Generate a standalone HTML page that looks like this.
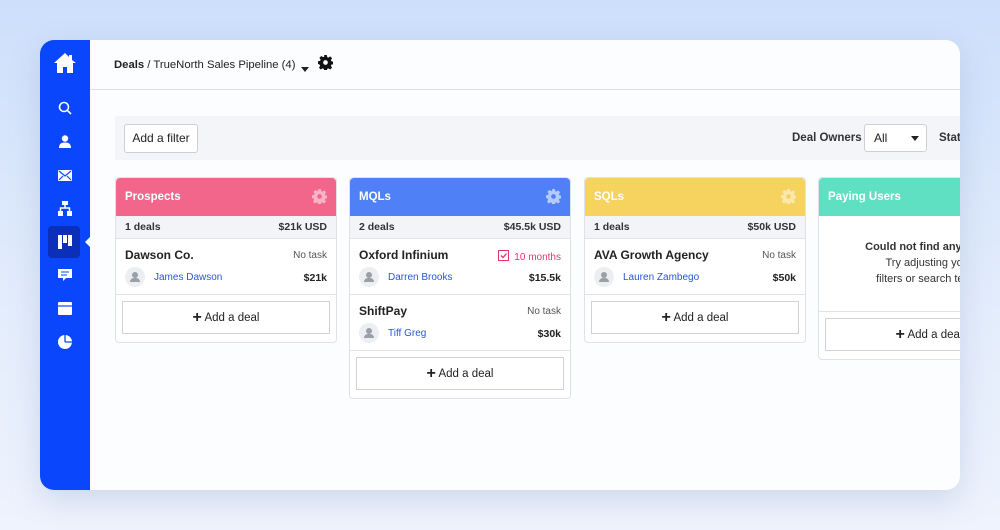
<!DOCTYPE html><html><head><style>
*{box-sizing:border-box;margin:0;padding:0}
body{width:1000px;height:530px;overflow:hidden;background:linear-gradient(180deg,#cddffb 0%,#e4edfc 60%,#eef3fd 100%);font-family:"Liberation Sans",sans-serif;color:#222;position:relative}
.card{position:absolute;left:40px;top:40px;width:920px;height:450px;background:#fcfdfe;border-radius:14px;overflow:hidden;box-shadow:0 10px 30px rgba(120,140,180,.25)}
.side{position:absolute;left:0;top:0;width:50px;height:450px;background:#0a46fb}
.ic{position:absolute;left:0;width:50px;display:flex;justify-content:center}
.top{position:absolute;left:50px;top:0;right:0;height:50px;border-bottom:1px solid #dde1e7}
.crumb{position:absolute;left:24px;top:19px;font-size:11.3px;color:#222;white-space:nowrap}
.bar{position:absolute;left:75px;top:76px;right:0;height:44px;background:#f3f5f9}
.btn{position:absolute;background:#fff;border:1px solid #ccd0d6;border-radius:3px;font-size:12px}
.col{position:absolute;top:137px;width:222px;border:1px solid #dfe2e6;border-radius:4px;background:#fff}
.hd{height:38px;border-radius:4px 4px 0 0;color:#fff;font-weight:bold;font-size:11.5px;padding:13px 9px;position:relative}
.gear{position:absolute;right:9px;top:11px}
.sum{height:23px;background:#f2f4f8;border-bottom:1px solid #dfe2e6;font-size:10.5px;font-weight:bold;color:#333;display:flex;justify-content:space-between;padding:5px 9px}
.deal{height:56px;border-bottom:1px solid #dfe2e6;position:relative;font-size:11px}
.nm{position:absolute;left:9px;top:9px;font-weight:bold;font-size:12px}
.tk{position:absolute;right:9px;top:11px;font-size:10px;color:#555}
.av{position:absolute;left:9px;top:28px;width:20px;height:20px;border-radius:50%;background:#eceef1}
.av:after{content:"";position:absolute;left:7px;top:5px;width:6px;height:6px;border-radius:50%;background:#9aa0a8}
.av:before{content:"";position:absolute;left:5px;top:11px;width:10px;height:4px;border-radius:5px 5px 0 0;background:#9aa0a8}
.pn{position:absolute;left:38px;top:33px;font-size:10px;color:#2a55d8}
.am{position:absolute;right:9px;top:33px;font-size:10.5px;font-weight:bold}
.add{height:47px;padding:6px 6px}
.add div{border:1px solid #cfd3d8;height:33px;text-align:center;font-size:11.5px;line-height:31px;color:#222}
.add b{font-size:16px;font-weight:bold;vertical-align:-1px}
</style></head><body>
<div class="card">
<div class="side">
<div class="ic" style="top:12px"><svg width="24" height="22" viewBox="0 0 24 22"><path d="M12 1L1 11h3v10h6v-6h4v6h6V11h3L19 8V3h-3v2z" fill="#fff"/></svg></div>
<div class="ic" style="top:61px"><svg width="14" height="14"><circle cx="6" cy="6" r="4.5" stroke="#fff" stroke-width="1.6" fill="none"/><path d="M9.5 9.5L13 13" stroke="#fff" stroke-width="1.6"/></svg></div>
<div class="ic" style="top:95px"><svg width="12" height="13"><circle cx="6" cy="3.5" r="3.2" fill="#fff"/><path d="M0 13c0-4 2-5.5 6-5.5s6 1.5 6 5.5z" fill="#fff"/></svg></div>
<div class="ic" style="top:130px"><svg width="14" height="11"><rect width="14" height="11" rx="1" fill="#fff"/><path d="M1 1l6 5 6-5M1 10l4-4M13 10l-4-4" stroke="#0a46fb" stroke-width="1.2" fill="none"/></svg></div>
<div class="ic" style="top:161px"><svg width="14" height="15"><rect x="4" y="0" width="6" height="4" fill="#fff"/><rect x="0" y="10" width="5" height="5" fill="#fff"/><rect x="9" y="10" width="5" height="5" fill="#fff"/><path d="M7 4v3M2.5 10V7h9v3" stroke="#fff" stroke-width="1.5" fill="none"/></svg></div>
<div style="position:absolute;left:8px;top:186px;width:32px;height:32px;background:#0b2fb8;border-radius:4px"></div>
<div class="ic" style="top:195px"><svg width="14" height="14"><rect x="0" y="0" width="4" height="14" fill="#fff"/><rect x="5" y="0" width="4" height="8" fill="#fff"/><rect x="10" y="0" width="4" height="11" fill="#fff"/></svg></div>
<div style="position:absolute;left:45px;top:197px;width:0;height:0;border-top:5px solid transparent;border-bottom:5px solid transparent;border-right:5px solid #fcfdfe"></div>
<div class="ic" style="top:228px"><svg width="14" height="14"><path d="M0 1h14v9H8l-3 3v-3H0z" fill="#fff"/><path d="M3 4h8M3 7h6" stroke="#0a46fb" stroke-width="1"/></svg></div>
<div class="ic" style="top:262px"><svg width="14" height="13"><rect width="14" height="13" rx="1" fill="#fff"/><path d="M0 4h14" stroke="#0a46fb" stroke-width="1.2"/></svg></div>
<div class="ic" style="top:295px"><svg width="14" height="14"><circle cx="7" cy="7" r="7" fill="#fff"/><path d="M7 7V0M7 7h7" stroke="#0a46fb" stroke-width="1.3"/></svg></div>
</div>
<div class="top"><div class="crumb"><b>Deals</b> / TrueNorth Sales Pipeline (4)</div>
<div style="position:absolute;left:211px;top:27px;width:0;height:0;border-left:4.5px solid transparent;border-right:4.5px solid transparent;border-top:5px solid #222"></div>
<svg style="position:absolute;left:228px;top:15px" width="15" height="15" viewBox="0 0 16 16"><path fill="#111" d="M6.6 0h2.8l.4 2.2 1.3.6 1.9-1.3 2 2-1.3 1.9.6 1.3 2.2.4v2.8l-2.2.4-.6 1.3 1.3 1.9-2 2-1.9-1.3-1.3.6-.4 2.2H6.6l-.4-2.2-1.3-.6-1.9 1.3-2-2 1.3-1.9-.6-1.3L0 9.4V6.6l2.2-.4.6-1.3-1.3-1.9 2-2 1.9 1.3 1.3-.6z"/><circle cx="8" cy="8" r="2.5" fill="#fff"/></svg></div>
<div class="bar">
<div class="btn" style="left:9px;top:8px;width:74px;height:29px;line-height:27px;text-align:center">Add a filter</div>
<div style="position:absolute;left:677px;top:16px;font-size:11.5px;font-weight:bold;color:#333">Deal Owners</div>
<div class="btn" style="left:749px;top:8px;width:63px;height:28px;line-height:26px;padding-left:9px">All<span style="position:absolute;right:7px;top:11px;width:0;height:0;border-left:4.5px solid transparent;border-right:4.5px solid transparent;border-top:5px solid #222"></span></div>
<div style="position:absolute;left:824px;top:16px;font-size:11.5px;font-weight:bold;color:#333">Stat</div>
</div>
<!-- col1 -->
<div class="col" style="left:75px"><div class="hd" style="background:#f2668b">Prospects<svg class="gear" width="15" height="15" viewBox="0 0 16 16"><path fill="#f9b3c6" d="M6.6 0h2.8l.4 2.2 1.3.6 1.9-1.3 2 2-1.3 1.9.6 1.3 2.2.4v2.8l-2.2.4-.6 1.3 1.3 1.9-2 2-1.9-1.3-1.3.6-.4 2.2H6.6l-.4-2.2-1.3-.6-1.9 1.3-2-2 1.3-1.9-.6-1.3L0 9.4V6.6l2.2-.4.6-1.3-1.3-1.9 2-2 1.9 1.3 1.3-.6z"/><circle cx="8" cy="8" r="2.5" fill="#f2668b"/></svg></div>
<div class="sum"><span>1 deals</span><span>$21k USD</span></div>
<div class="deal"><span class="nm">Dawson Co.</span><span class="tk">No task</span><span class="av"></span><span class="pn">James Dawson</span><span class="am">$21k</span></div>
<div class="add"><div><b>+</b> Add a deal</div></div></div>
<!-- col2 -->
<div class="col" style="left:309px"><div class="hd" style="background:#4f80f6">MQLs<svg class="gear" width="15" height="15" viewBox="0 0 16 16"><path fill="#b6cbfb" d="M6.6 0h2.8l.4 2.2 1.3.6 1.9-1.3 2 2-1.3 1.9.6 1.3 2.2.4v2.8l-2.2.4-.6 1.3 1.3 1.9-2 2-1.9-1.3-1.3.6-.4 2.2H6.6l-.4-2.2-1.3-.6-1.9 1.3-2-2 1.3-1.9-.6-1.3L0 9.4V6.6l2.2-.4.6-1.3-1.3-1.9 2-2 1.9 1.3 1.3-.6z"/><circle cx="8" cy="8" r="2.5" fill="#4f80f6"/></svg></div>
<div class="sum"><span>2 deals</span><span>$45.5k USD</span></div>
<div class="deal"><span class="nm">Oxford Infinium</span><span class="tk" style="color:#e0356b"><svg width="11" height="11" style="vertical-align:-1px;margin-right:5px"><rect x=".5" y=".5" width="10" height="10" fill="none" stroke="#e0356b"/><path d="M3 5.5l2 2 3.5-4" stroke="#e0356b" stroke-width="1.3" fill="none"/></svg>10 months</span><span class="av"></span><span class="pn">Darren Brooks</span><span class="am">$15.5k</span></div>
<div class="deal"><span class="nm">ShiftPay</span><span class="tk">No task</span><span class="av"></span><span class="pn">Tiff Greg</span><span class="am">$30k</span></div>
<div class="add"><div><b>+</b> Add a deal</div></div></div>
<!-- col3 -->
<div class="col" style="left:544px"><div class="hd" style="background:#f6d25f">SQLs<svg class="gear" width="15" height="15" viewBox="0 0 16 16"><path fill="#fbe8ad" d="M6.6 0h2.8l.4 2.2 1.3.6 1.9-1.3 2 2-1.3 1.9.6 1.3 2.2.4v2.8l-2.2.4-.6 1.3 1.3 1.9-2 2-1.9-1.3-1.3.6-.4 2.2H6.6l-.4-2.2-1.3-.6-1.9 1.3-2-2 1.3-1.9-.6-1.3L0 9.4V6.6l2.2-.4.6-1.3-1.3-1.9 2-2 1.9 1.3 1.3-.6z"/><circle cx="8" cy="8" r="2.5" fill="#f6d25f"/></svg></div>
<div class="sum"><span>1 deals</span><span>$50k USD</span></div>
<div class="deal"><span class="nm">AVA Growth Agency</span><span class="tk">No task</span><span class="av"></span><span class="pn">Lauren Zambego</span><span class="am">$50k</span></div>
<div class="add"><div><b>+</b> Add a deal</div></div></div>
<!-- col4 -->
<div class="col" style="left:778px;width:222px"><div class="hd" style="background:#5fe0c2">Paying Users</div>
<div style="height:96px;border-bottom:1px solid #dfe2e6;text-align:center;font-size:11px;line-height:16px;padding-top:23px;color:#333"><b>Could not find any deals</b><br>Try adjusting your<br>filters or search terms</div>
<div class="add"><div><b>+</b> Add a deal</div></div></div>
</div>
</body></html>
